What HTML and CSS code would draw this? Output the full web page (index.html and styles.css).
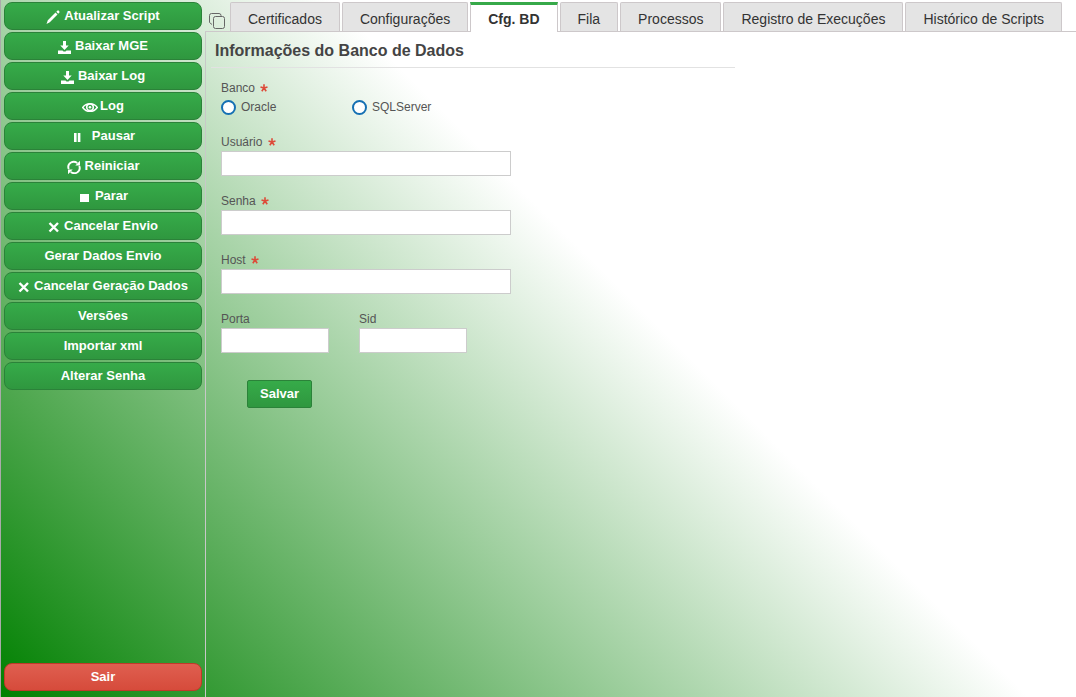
FILE: index.html
```html
<!DOCTYPE html>
<html lang="pt-BR">
<head>
<meta charset="utf-8">
<title>Cfg. BD</title>
<link rel="stylesheet" href="styles.css">
</head>
<body>
<div class="app">
  <nav class="sidebar">
    <button class="btn" type="button"><svg class="icon" width="14" height="14" viewBox="0 0 14 14"><path d="M0.500 14l1.300-3.800L9.500 2.500l2 2-7.700 7.700zM10.300 1.700L11.600.5q.5-.3.900 0l.9.900q.4.500 0 1L12.200 3.700z"/></svg>Atualizar Script</button>
    <button class="btn" type="button"><svg class="icon" width="13" height="14" viewBox="0 0 13 14"><path d="M5 1h3v4.500h2.700L6.500 10 2.300 5.500H5zM0 10.500h4.500L5.500 11.500h2l1-1H13V14H0z"/></svg>Baixar MGE</button>
    <button class="btn" type="button"><svg class="icon" width="13" height="14" viewBox="0 0 13 14"><path d="M5 1h3v4.500h2.700L6.500 10 2.300 5.500H5zM0 10.500h4.500L5.500 11.500h2l1-1H13V14H0z"/></svg>Baixar Log</button>
    <button class="btn tight" type="button"><svg class="icon" width="16" height="14" viewBox="0 0 16 14"><path fill="none" stroke="currentColor" stroke-width="1.400" d="M.700 7.500Q3.500 3.600 8 3.600t7.300 3.900Q12.500 11.400 8 11.400T.700 7.500z"/><circle cx="8" cy="7.300" r="3.300" fill="none" stroke="currentColor" stroke-width="1.600"/><circle cx="8" cy="7.300" r="1.300"/></svg>Log</button>
    <button class="btn" type="button"><svg class="icon" width="17" height="14" viewBox="0 0 17 14"><path d="M3 3h2.600v9H3zM6.800 3h2.600v9H6.800z"/></svg>Pausar</button>
    <button class="btn" type="button"><svg class="icon" width="14" height="14" viewBox="0 0 14 14"><path fill="none" stroke="currentColor" stroke-width="1.900" d="M1.700 9A5.400 5.400 0 0 1 4 2.500Q7 .800 10.300 3M12.300 6A5.400 5.400 0 0 1 10 12.500Q7 14.200 3.700 12"/><path d="M13 .800v4.700H8.300zM1 14.200V9.500h4.700z"/></svg>Reiniciar</button>
    <button class="btn" type="button"><svg class="icon" width="13" height="14" viewBox="0 0 13 14"><path d="M2 4h9v8H2z"/></svg>Parar</button>
    <button class="btn" type="button"><svg class="icon" width="12" height="14" viewBox="0 0 12 14"><path fill="none" stroke="currentColor" stroke-width="2.400" d="M1.500 3l8.500 8.500M10 3L1.500 11.500"/></svg>Cancelar Envio</button>
    <button class="btn" type="button">Gerar Dados Envio</button>
    <button class="btn" type="button"><svg class="icon" width="12" height="14" viewBox="0 0 12 14"><path fill="none" stroke="currentColor" stroke-width="2.400" d="M1.500 3l8.500 8.500M10 3L1.500 11.500"/></svg>Cancelar Geração Dados</button>
    <button class="btn" type="button">Versões</button>
    <button class="btn" type="button">Importar xml</button>
    <button class="btn" type="button">Alterar Senha</button>
    <button class="btn exit" type="button">Sair</button>
  </nav>
  <main class="main">
    <div class="tabs" role="tablist">
      <button class="windows" type="button" aria-label="Janelas"><svg width="16" height="16" viewBox="0 0 16 16" fill="none" stroke="#666"><rect x="4.500" y="3.500" width="11" height="12" rx="2"/><path d="M3 11.500L.500 9.500v-7q0-2 2-2h7.500q2 0 2 2V3"/></svg></button>
      <button class="tab" type="button" role="tab">Certificados</button>
      <button class="tab" type="button" role="tab">Configurações</button>
      <button class="tab active" type="button" role="tab" aria-selected="true">Cfg. BD</button>
      <button class="tab" type="button" role="tab">Fila</button>
      <button class="tab" type="button" role="tab">Processos</button>
      <button class="tab" type="button" role="tab">Registro de Execuções</button>
      <button class="tab" type="button" role="tab">Histórico de Scripts</button>
    </div>
    <section class="panel">
      <h1 class="title">Informações do Banco de Dados</h1>
      <form class="form">
        <fieldset class="group">
          <legend class="label">Banco <svg class="req" width="8" height="8" viewBox="0 0 8 8"><path d="M4 4V.300M4 4L.500 2.900M4 4l3.500-1.100M4 4L1.800 7.300M4 4l2.200 3.300"/></svg></legend>
          <div class="radios">
            <label class="option"><input class="radio" type="radio" name="banco">Oracle</label>
            <label class="option"><input class="radio" type="radio" name="banco">SQLServer</label>
          </div>
        </fieldset>
        <div class="field">
          <label class="label" for="usuario">Usuário <svg class="req" width="8" height="8" viewBox="0 0 8 8"><path d="M4 4V.300M4 4L.500 2.900M4 4l3.500-1.100M4 4L1.800 7.300M4 4l2.200 3.300"/></svg></label>
          <input class="input" id="usuario" type="text">
        </div>
        <div class="field">
          <label class="label" for="senha">Senha <svg class="req" width="8" height="8" viewBox="0 0 8 8"><path d="M4 4V.300M4 4L.500 2.900M4 4l3.500-1.100M4 4L1.800 7.300M4 4l2.200 3.300"/></svg></label>
          <input class="input" id="senha" type="password">
        </div>
        <div class="field">
          <label class="label" for="host">Host <svg class="req" width="8" height="8" viewBox="0 0 8 8"><path d="M4 4V.300M4 4L.500 2.900M4 4l3.500-1.100M4 4L1.800 7.300M4 4l2.200 3.300"/></svg></label>
          <input class="input" id="host" type="text">
        </div>
        <div class="row">
          <div class="field small">
            <label class="label" for="porta">Porta</label>
            <input class="input" id="porta" type="text">
          </div>
          <div class="field small">
            <label class="label" for="sid">Sid</label>
            <input class="input" id="sid" type="text">
          </div>
        </div>
        <button class="btn save" type="button">Salvar</button>
      </form>
    </section>
  </main>
</div>
</body>
</html>
```
FILE: styles.css
```css
* { box-sizing: border-box; }
body {
  margin: 0;
  font-family: "Liberation Sans", Arial, sans-serif;
  font-size: 12px;
  color: #555;
}
button, input { font: inherit; }
.app {
  display: flex;
  min-height: 100vh;
  border-left: 1px solid #aaa;
  background: linear-gradient(45deg, green 0%, white 58%);
}
.sidebar {
  display: flex;
  flex-direction: column;
  flex: 0 0 204px;
  gap: 2px;
  padding: 2px 3px 6px;
}
.btn {
  display: flex;
  align-items: center;
  justify-content: center;
  gap: 4px;
  height: 28px;
  padding: 0 12px 1px;
  border: 1px solid #2b8239;
  border-radius: 8px;
  background: linear-gradient(#36ab49, #2f973f);
  color: #fff;
  font-size: 13px;
  font-weight: bold;
  line-height: 16px;
  white-space: nowrap;
}
.tight { gap: 2px; }
.icon {
  flex: none;
  margin-top: 3px;
  fill: currentColor;
}
.exit {
  margin-top: auto;
  border-color: #c0392b;
  background: linear-gradient(#df5f50, #d64b3b);
}
.main {
  display: flex;
  flex: 1;
  flex-direction: column;
  min-width: 0;
}
.tabs {
  display: flex;
  gap: 2px;
  height: 32px;
  padding: 2px 0 0 4px;
  border-bottom: 1px solid #cdc8ca;
}
.windows {
  display: flex;
  align-items: flex-end;
  width: 19px;
  padding: 0 0 2px;
  border: 0;
  background: none;
}
.tab {
  height: 29px;
  padding: 4px 17px 0;
  border: 1px solid #cdc8ca;
  border-bottom: 0;
  border-radius: 2px 2px 0 0;
  background: #e4e4e4;
  color: #333;
  font-size: 14px;
  line-height: 16px;
  white-space: nowrap;
}
.active {
  height: 30px;
  padding: 2px 17px 2px;
  border-top: 3px solid #36a949;
  border-radius: 0;
  background: #fff;
  font-weight: bold;
}
.panel {
  flex: 1;
  padding: 0 5px;
  border-left: 1px solid #c8c8c8;
}
.title {
  max-width: 524px;
  margin: 0;
  padding: 10px 4px 7px;
  border-bottom: 1px solid #e2e2e2;
  color: #444;
  font-size: 16px;
  line-height: 18px;
}
.form {
  display: flex;
  flex-direction: column;
  gap: 17px;
  max-width: 300px;
  padding: 12px 0 0 10px;
}
.group {
  min-width: 0;
  margin: 0;
  padding: 0;
  border: 0;
}
.label {
  display: block;
  padding: 0 0 1px;
  line-height: 16px;
}
.req {
  margin: 1px 0 0 2px;
  vertical-align: middle;
  margin-top: -1px;
  fill: none;
  stroke: #dd4b39;
  stroke-width: 1.6;
}
.radios {
  display: grid;
  grid-template-columns: 131px 1fr;
  padding: 2px 0;
}
.option {
  display: flex;
  align-items: center;
  gap: 5px;
  height: 16px;
}
.radio {
  appearance: none;
  width: 15px;
  height: 15px;
  margin: 0;
  border: 2px solid #1570b3;
  border-radius: 50%;
  background: #fff;
}
.input {
  display: block;
  width: 100%;
  height: 25px;
  padding: 2px 6px;
  border: 1px solid #ccc;
  border-radius: 0;
  background: #fff;
}
.row {
  display: flex;
  gap: 30px;
}
.small { flex: 0 0 108px; }
.save {
  align-self: flex-start;
  margin: 10px 26px;
  border-radius: 2px;
}
```
